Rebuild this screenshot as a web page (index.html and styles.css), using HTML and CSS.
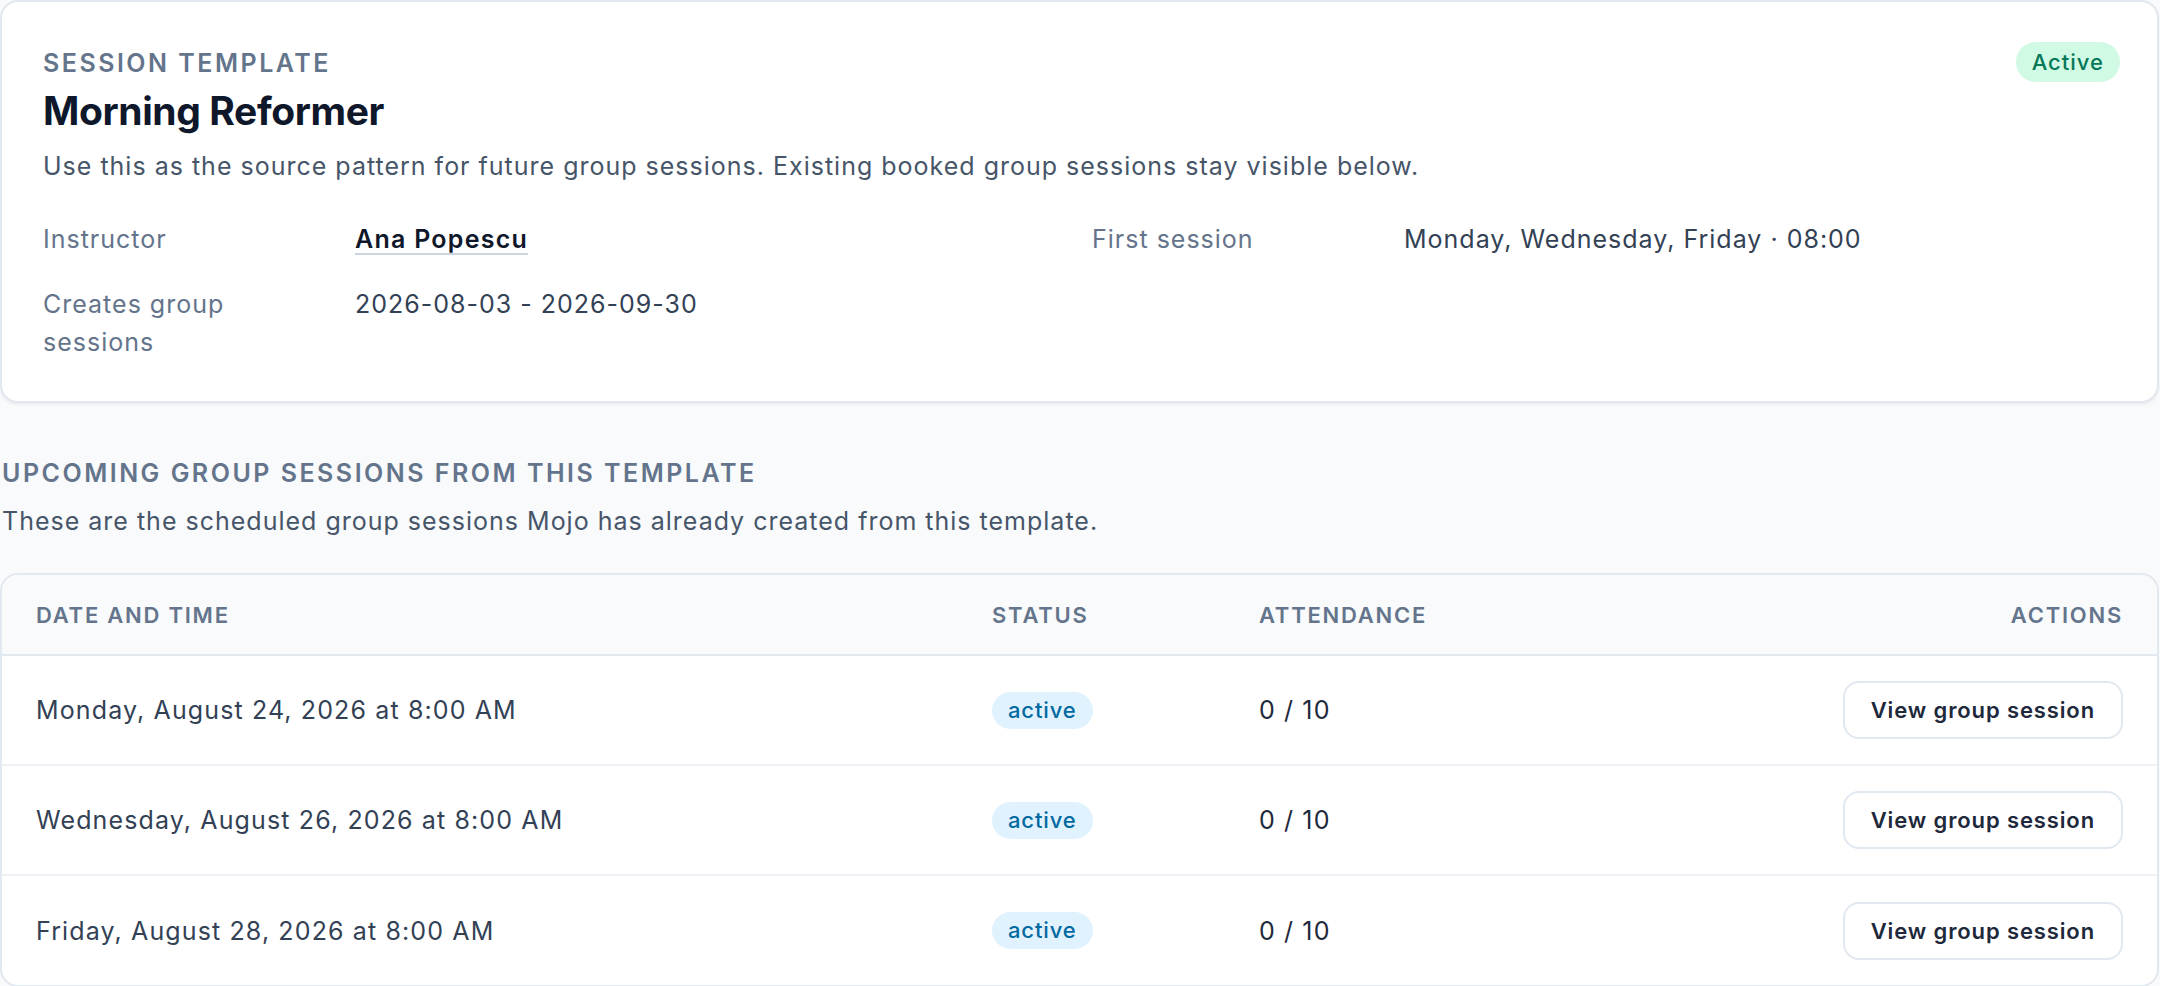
FILE: index.html
```html
<!DOCTYPE html>
<html lang="en">
  <head>
    <meta charset="utf-8">
    <title>Morning Reformer · Session template</title>
    <link rel="stylesheet" href="styles.css">
  </head>
  <body>
  <main class="page">
    <section class="template-card">
      <div class="card-head">
        <div class="card-title">
          <p class="eyebrow">Session template</p>
          <h1>Morning Reformer</h1>
          <p class="lede">Use this as the source pattern for future group sessions. Existing booked group sessions stay visible below.</p>
        </div>
        <span class="badge badge-active">Active</span>
      </div>

      <dl class="facts">
        <dt>Instructor</dt>
        <dd><a href="#" class="person-link">Ana Popescu</a></dd>
        <dt>First session</dt>
        <dd>Monday, Wednesday, Friday · 08:00</dd>
        <dt>Creates group sessions</dt>
        <dd>2026-08-03 - 2026-09-30</dd>
      </dl>
    </section>

    <section class="upcoming">
      <h2 class="section-title">Upcoming group sessions from this template</h2>
      <p class="section-note">These are the scheduled group sessions Mojo has already created from this template.</p>

      <div class="table-wrap">
        <table class="sessions">
          <thead>
            <tr>
              <th class="col-date">Date and time</th>
              <th class="col-status">Status</th>
              <th class="col-attendance">Attendance</th>
              <th class="col-actions">Actions</th>
            </tr>
          </thead>
          <tbody>
            <tr>
              <td>Monday, August 24, 2026 at 8:00 AM</td>
              <td><span class="pill">active</span></td>
              <td class="count">0 / 10</td>
              <td class="actions"><a href="#" class="btn">View group session</a></td>
            </tr>
            <tr>
              <td>Wednesday, August 26, 2026 at 8:00 AM</td>
              <td><span class="pill">active</span></td>
              <td class="count">0 / 10</td>
              <td class="actions"><a href="#" class="btn">View group session</a></td>
            </tr>
            <tr>
              <td>Friday, August 28, 2026 at 8:00 AM</td>
              <td><span class="pill">active</span></td>
              <td class="count">0 / 10</td>
              <td class="actions"><a href="#" class="btn">View group session</a></td>
            </tr>
          </tbody>
        </table>
      </div>
    </section>
  </main>
  </body>
</html>
```

FILE: styles.css
```css
:root {
  --ink: #0f172a;
  --text: #334155;
  --muted: #475569;
  --label: #64748b;
  --line: #e2e8f0;
  --line-soft: #edf1f6;
  --page: #f8fafc;
  --white: #ffffff;
}

* {
  margin: 0;
  padding: 0;
  box-sizing: border-box;
}

body {
  background: var(--page);
  font-family: Inter, "Noto Sans", sans-serif;
  font-size: 25px;
  letter-spacing: 0.04em;
  color: var(--text);
}

.page {
  width: 2159px;
}

/* template summary card */

.template-card {
  background: var(--white);
  border: 2px solid var(--line);
  border-radius: 18px;
  box-shadow: 0 2px 3px rgba(15, 23, 42, 0.06);
  padding: 44px 37px 40px 41px;
}

.card-head {
  display: flex;
  justify-content: space-between;
  align-items: flex-start;
  gap: 24px;
}

.eyebrow {
  font-size: 25px;
  line-height: 34px;
  font-weight: 600;
  letter-spacing: 0.1em;
  text-transform: uppercase;
  color: var(--label);
}

h1 {
  margin-top: 7px;
  font-size: 39px;
  line-height: 48px;
  font-weight: 700;
  letter-spacing: -0.01em;
  color: var(--ink);
}

.lede {
  margin-top: 13px;
  line-height: 36px;
  color: var(--muted);
}

.badge {
  margin-top: -4px;
  padding: 0 16px;
  height: 40px;
  line-height: 40px;
  border-radius: 20px;
  font-size: 22px;
  font-weight: 500;
}

.badge-active {
  background: #d1fae5;
  color: #047857;
}

.facts {
  margin-top: 36px;
  display: grid;
  grid-template-columns: 284px 709px 284px 1fr;
  column-gap: 28px;
  row-gap: 27px;
  line-height: 38px;
}

.facts dt {
  color: var(--label);
}

.facts dd {
  color: var(--text);
}

.person-link {
  color: var(--ink);
  font-weight: 600;
  letter-spacing: 0.05em;
  text-decoration: underline;
  text-decoration-color: #cbd5e1;
  text-decoration-thickness: 2px;
  text-underline-offset: 5px;
}

/* upcoming sessions */

.section-title {
  margin-top: 53px;
  padding-left: 2px;
  font-size: 25px;
  line-height: 34px;
  font-weight: 600;
  letter-spacing: 0.1em;
  text-transform: uppercase;
  color: var(--label);
}

.section-note {
  margin-top: 13px;
  padding-left: 2px;
  line-height: 36px;
  color: var(--muted);
}

.table-wrap {
  margin-top: 34px;
  background: var(--white);
  border: 2px solid var(--line);
  border-radius: 18px;
  overflow: hidden;
}

.sessions {
  width: 100%;
  border-collapse: collapse;
  table-layout: fixed;
}

.sessions th {
  height: 80px;
  background: var(--page);
  border-bottom: 2px solid var(--line);
  padding: 0 34px;
  text-align: left;
  font-size: 22px;
  font-weight: 600;
  letter-spacing: 0.08em;
  text-transform: uppercase;
  color: var(--label);
}

.col-date { width: 956px; }
.col-status { width: 267px; }
.col-actions { width: 420px; }

.sessions th.col-actions {
  text-align: right;
}

.sessions td {
  height: 110px;
  padding: 0 34px;
  letter-spacing: 0.045em;
  color: var(--text);
  border-bottom: 2px solid var(--line-soft);
}

.sessions tbody tr:last-child td {
  border-bottom: none;
}

.sessions td.count {
  color: #1e293b;
}

.sessions td.actions {
  text-align: right;
}

.pill {
  display: inline-block;
  height: 37px;
  line-height: 37px;
  padding: 0 16px;
  border-radius: 19px;
  background: #e0f2fe;
  color: #0369a1;
  font-size: 22px;
  font-weight: 500;
  letter-spacing: 0.04em;
}

.btn {
  display: inline-block;
  height: 58px;
  line-height: 54px;
  padding: 0 26px;
  border: 2px solid var(--line);
  border-radius: 16px;
  background: var(--white);
  color: #1e293b;
  font-size: 22px;
  font-weight: 600;
  letter-spacing: 0.04em;
  white-space: nowrap;
  text-decoration: none;
}
```
